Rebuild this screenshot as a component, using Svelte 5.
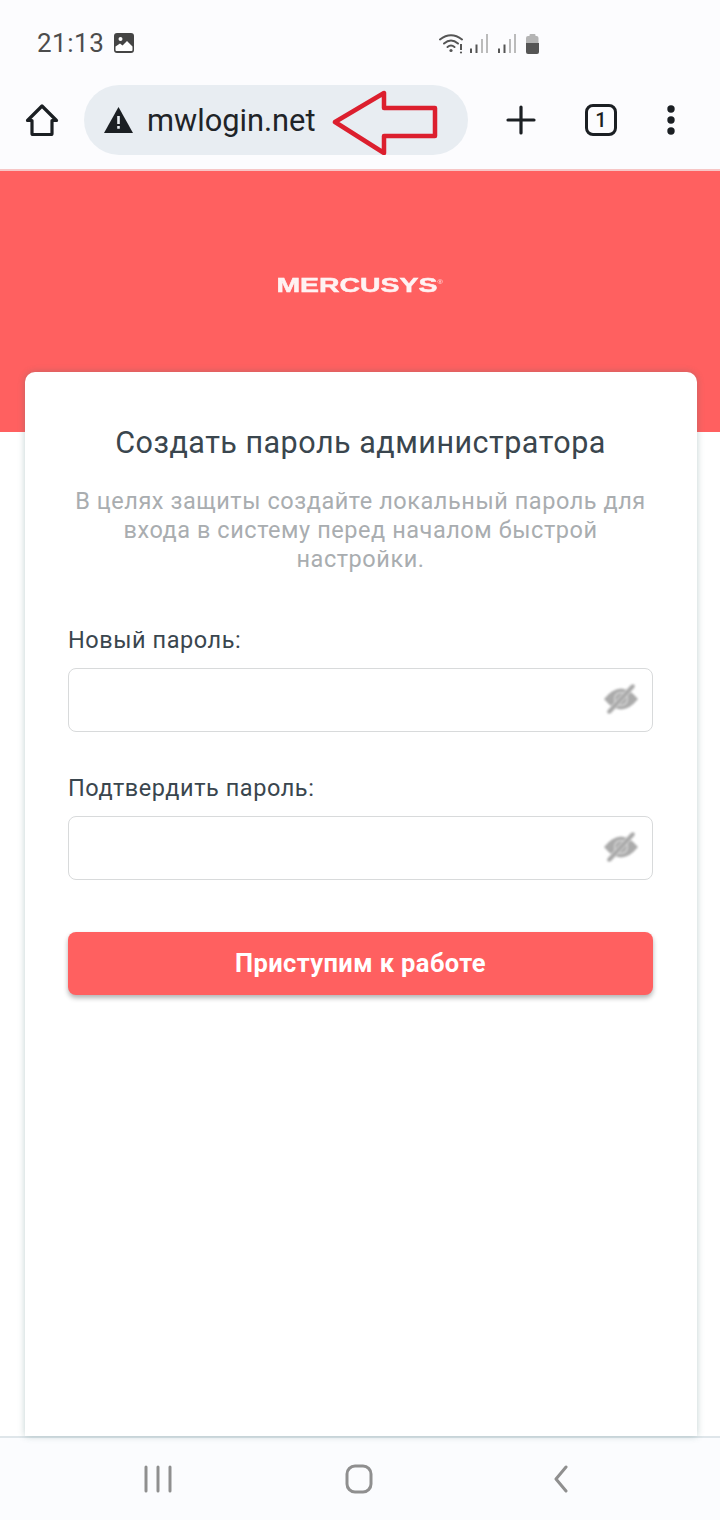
<script lang="ts">
  // Form fields:
  const fields = [
    { id: 'new-password', label: 'Новый пароль:' },
    { id: 'confirm-password', label: 'Подтвердить пароль:' }
  ];
</script>

<div class="phone">
  <header class="browser">
    <div class="status">
      <div class="status-left">
        <span class="time">21:13</span>
        <svg class="gallery" width="20" height="20" viewBox="0 0 20 20">
          <rect width="20" height="20" rx="3" fill="#444"/>
          <circle cx="6.500" cy="6" r="2" fill="#fff"/>
          <path d="M1.500 17v-3.500L6 10.500l2.500 2L13 8l5.500 5.500V17q0 1-1 1h-15q-1 0-1-1z" fill="#fff"/>
        </svg>
      </div>
      <svg class="status-right" width="102" height="22" viewBox="0 0 102 22">
        <g fill="none" stroke="#555" stroke-width="2" stroke-linecap="round">
          <path d="M1 7.500Q12-1 23 7.500"/>
          <path d="M5 11.500Q12 5.500 19 11.500"/>
          <path d="M8.500 15Q12 12 15.500 15"/>
        </g>
        <circle cx="12" cy="18.500" r="1.600" fill="#555"/>
        <path d="M22 12v6" stroke="#555" stroke-width="2"/>
        <circle cx="22" cy="20.500" r="1.100" fill="#555"/>
        <g stroke-width="2" stroke="#555">
          <path d="M32 16.500V21"/><path d="M37.500 12.500V21"/>
          <path d="M60 16.500V21"/><path d="M65.500 12.500V21"/>
        </g>
        <g stroke-width="2" stroke="#bbb">
          <path d="M43 7V21"/><path d="M48 2V21"/>
          <path d="M71 7V21"/><path d="M76 2V21"/>
        </g>
        <path d="M90.500 3q0-1 1-1h4q1 0 1 1v1h1q2 0 2 2v6H87V6q0-2 2-2h1.500z" fill="#b4b4b4"/>
        <path d="M87 11h13v9q0 2-2 2H89q-2 0-2-2z" fill="#555"/>
      </svg>
    </div>

    <div class="toolbar">
      <svg class="home" width="34" height="34" viewBox="0 0 34 34" fill="none" stroke="#1b1f23" stroke-width="3.200" stroke-linejoin="round">
        <path d="M2.500 17.500 17 3l14.500 14.500H27v13a1 1 0 0 1-1 1H8a1 1 0 0 1-1-1v-13z"/>
      </svg>
      <div class="omnibox">
        <svg width="29" height="26" viewBox="0 0 29 26">
          <path d="M14.500 0 29 26H0z" fill="#1b1f23"/>
          <path d="M13.200 9h2.600v8h-2.600zM13.200 19h2.600v2.700h-2.600z" fill="#e8edf2"/>
        </svg>
        <span class="url">mwlogin.net</span>
      </div>
      <svg class="plus" width="30" height="30" viewBox="0 0 30 30" stroke="#1b1f23" stroke-width="3.200" stroke-linecap="round">
        <path d="M15 2v26M2 15h26"/>
      </svg>
      <div class="tabs">1</div>
      <svg class="more" width="10" height="30" viewBox="0 0 10 30" fill="#1b1f23">
        <circle cx="5" cy="4" r="3.700"/><circle cx="5" cy="15" r="3.700"/><circle cx="5" cy="26" r="3.700"/>
      </svg>
    </div>

    <!-- Red annotation arrow drawn over the address bar -->
    <svg class="arrow" width="108" height="66" viewBox="0 0 108 66" fill="none" stroke="#dc1f2e" stroke-width="4.500" stroke-linejoin="round">
      <path d="M3 33 52 4v15h51v28H52v17z"/>
    </svg>
  </header>

  <main class="content">
    <div class="hero">
      <span class="logo">MERCUSYS<sup>®</sup></span>
    </div>

    <section class="card">
      <h1>Создать пароль администратора</h1>
      <p class="intro">В целях защиты создайте локальный пароль для входа в систему перед началом быстрой настройки.</p>

      <form class="form">
        {#each fields as field}
          <div class="field">
            <label for={field.id}>{field.label}</label>
            <div class="input-wrap">
              <input id={field.id} type="password" />
              <svg class="eye" width="36" height="30" viewBox="0 0 36 30">
                <path d="M1 15Q18-6 35 15 18 36 1 15z" fill="#ababab"/>
                <circle cx="18" cy="15" r="6.500" fill="none" stroke="#d4d4d4" stroke-width="1.500"/>
                <path d="M6 28 30 2" stroke="#dcdcdc" stroke-width="5.500"/>
                <path d="M6 28 30 2" stroke="#a8a8a8" stroke-width="3.500" stroke-linecap="round"/>
              </svg>
            </div>
          </div>
        {/each}
        <button type="button">Приступим к работе</button>
      </form>
    </section>
  </main>

  <nav class="nav">
    <svg width="28" height="28" viewBox="0 0 28 28" stroke="#8f8f8f" stroke-width="3" stroke-linecap="round">
      <path d="M2 2v24M14 2v24M26 2v24"/>
    </svg>
    <svg width="28" height="30" viewBox="0 0 28 30" fill="none" stroke="#8f8f8f" stroke-width="3">
      <rect x="2" y="2" width="24" height="26" rx="8"/>
    </svg>
    <svg width="18" height="28" viewBox="0 0 18 28" fill="none" stroke="#8f8f8f" stroke-width="3" stroke-linecap="round" stroke-linejoin="round">
      <path d="M15 2 5 14l10 12"/>
    </svg>
  </nav>
</div>

<style>
  :global(body) {
    margin: 0;
    background: #fff;
  }

  .phone {
    display: flex;
    flex-direction: column;
    width: 720px;
    height: 1520px;
    overflow: hidden;
    font-family: Roboto, "Liberation Sans", sans-serif;
  }

  .browser {
    position: relative;
    height: 169px;
    flex: none;
    background: #fcfcfe;
    border-bottom: 2px solid #f7c6c6;
  }

  .status {
    display: flex;
    justify-content: space-between;
    align-items: center;
    height: 28px;
    padding: 29px 179px 0 37px;
  }

  .status-left {
    display: flex;
    align-items: center;
    gap: 10px;
  }

  .time {
    font-size: 26px;
    line-height: 28px;
    letter-spacing: .5px;
    color: #4c4c4c;
  }

  .toolbar {
    display: flex;
    align-items: center;
    height: 70px;
    margin-top: 28px;
    padding-left: 25px;
  }

  .home {
    flex: none;
  }

  .omnibox {
    display: flex;
    align-items: center;
    gap: 14px;
    width: 384px;
    height: 70px;
    margin-left: 25px;
    padding-left: 20px;
    box-sizing: border-box;
    background: #e8edf2;
    border-radius: 35px;
  }

  .url {
    font-size: 30.800px;
    color: #1f2428;
  }

  .plus {
    margin-left: 38px;
  }

  .tabs {
    display: flex;
    align-items: center;
    justify-content: center;
    width: 32px;
    height: 32px;
    box-sizing: border-box;
    margin-left: 49px;
    font-size: 20px;
    font-weight: 500;
    color: #1b1f23;
    border: 3px solid #1b1f23;
    border-radius: 8px;
  }

  .more {
    margin-left: 49px;
  }

  .arrow {
    position: absolute;
    left: 332px;
    top: 89px;
  }

  .content {
    flex: 1;
    min-height: 0;
    background: #fff;
  }

  .hero {
    display: flex;
    justify-content: center;
    height: 261px;
    background: #ff6060;
  }

  .logo {
    margin-top: 103px;
    height: 22px;
    font-family: "Liberation Sans", sans-serif;
    font-size: 20px;
    line-height: 22px;
    font-weight: 700;
    color: #fff;
    opacity: .92;
    transform: scaleX(1.42);
    filter: blur(.4px);
    -webkit-text-stroke: .5px #fff;
  }

  .logo sup {
    font-size: 5px;
    line-height: 0;
    font-weight: 400;
    -webkit-text-stroke: 0;
  }

  .card {
    position: relative;
    height: 1064px;
    margin: -60px 23px 0 25px;
    padding: 51px 44px 0 43px;
    box-sizing: border-box;
    background: #fff;
    border-radius: 10px 10px 0 0;
    box-shadow: 0 0 7px rgba(60, 110, 110, .32);
  }

  h1 {
    margin: 0;
    font-size: 30.500px;
    line-height: 40px;
    letter-spacing: .5px;
    font-weight: 400;
    text-align: center;
    color: #3a464e;
  }

  .intro {
    margin: 24px 0 0;
    font-size: 23.500px;
    line-height: 29px;
    letter-spacing: .55px;
    text-align: center;
    color: #a9adb0;
  }

  .form {
    display: flex;
    flex-direction: column;
    margin-top: 51px;
  }

  .field {
    display: flex;
    flex-direction: column;
    margin-bottom: 41px;
  }

  label {
    font-size: 23.500px;
    line-height: 30px;
    letter-spacing: .55px;
    color: #3a464e;
    margin-bottom: 13px;
  }

  .input-wrap {
    position: relative;
  }

  input {
    display: block;
    width: 100%;
    height: 64px;
    box-sizing: border-box;
    background: #fff;
    border: 1px solid #d8dadb;
    border-radius: 8px;
  }

  .eye {
    position: absolute;
    right: 14px;
    top: 16px;
    filter: blur(.9px);
  }

  button {
    height: 63px;
    margin-top: 11px;
    padding: 0 0 2px;
    font: inherit;
    font-size: 25.500px;
    letter-spacing: .4px;
    font-weight: 700;
    color: #fff;
    background: #ff6060;
    border: none;
    border-radius: 8px;
    box-shadow: 0 3px 5px rgba(0, 0, 0, .3);
  }

  .nav {
    display: grid;
    grid-template-columns: 200px 201px 202px;
    justify-items: center;
    align-items: center;
    height: 82px;
    flex: none;
    padding-left: 58px;
    background: #fbfcfe;
    border-top: 2px solid #dfe6ea;
  }
</style>
